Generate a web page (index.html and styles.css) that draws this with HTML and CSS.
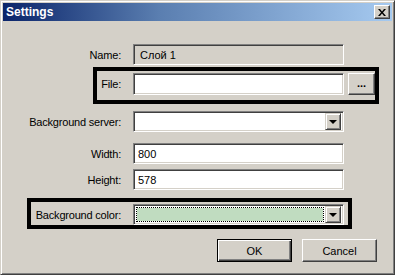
FILE: index.html
```html
<!DOCTYPE html>
<html lang="en">
  <head>
    <meta charset="UTF-8" />
    <title>Settings</title>
    <link rel="stylesheet" href="styles.css">
  </head>
  <body>
    <div class="window">
      <div class="titlebar">
        <span class="title">Settings</span>
        <button class="close" type="button">
          <svg width="8" height="7" viewBox="0 0 8 7">
            <path d="M0 0h2l2 2.5L6 0h2L5 3.5 8 7H6L4 4.5 2 7H0l3-3.5z" fill="#000"/>
          </svg>
        </button>
      </div>

      <div class="content">
        <div class="row row-name">
          <label class="label">Name:</label>
          <div class="field readonly">Слой 1</div>
        </div>

        <div class="row row-file">
          <label class="label">File:</label>
          <div class="field"></div>
          <button class="btn browse" type="button">...</button>
          <span class="mark mark-file"></span>
        </div>

        <div class="row row-server">
          <label class="label">Background server:</label>
          <div class="field combo">
            <span class="combo-value"></span>
            <span class="drop"><i class="arrow"></i></span>
          </div>
        </div>

        <div class="row row-width">
          <label class="label">Width:</label>
          <div class="field">800</div>
        </div>

        <div class="row row-height">
          <label class="label">Height:</label>
          <div class="field">578</div>
        </div>

        <div class="row row-color">
          <label class="label">Background color:</label>
          <div class="field combo color-combo">
            <span class="combo-value"><span class="swatch"></span></span>
            <span class="drop"><i class="arrow"></i></span>
          </div>
          <span class="mark mark-color"></span>
        </div>

        <div class="buttons">
          <button class="btn btn-default" type="button">OK</button>
          <button class="btn" type="button">Cancel</button>
        </div>
      </div>
    </div>
  </body>
</html>
```

FILE: styles.css
```css
* {
  margin: 0;
  padding: 0;
  box-sizing: border-box;
}

body {
  font-family: 'Liberation Sans', Arial, sans-serif;
  font-size: 11px;
  color: #000;
  background: #d4d0c8;
}

.window {
  width: 395px;
  height: 275px;
  background: #d4d0c8;
  border: 1px solid;
  border-color: #d4d0c8 #404040 #404040 #d4d0c8;
  box-shadow: inset 1px 1px #fff, inset -1px -1px #808080;
  padding: 2px;
  display: flex;
  flex-direction: column;
}

.titlebar {
  height: 18px;
  display: flex;
  align-items: center;
  justify-content: space-between;
  padding: 0 2px 0 3px;
  background: linear-gradient(90deg, #0a246a 0%, #5a7eb0 40%, #a6caf0 100%);
}

.title {
  color: #fff;
  font-weight: bold;
  font-size: 12px;
  font-family: 'Liberation Sans', Arial, sans-serif;
}

.close {
  width: 16px;
  height: 14px;
  display: flex;
  align-items: center;
  justify-content: center;
  background: #d4d0c8;
  border: 1px solid;
  border-color: #fff #404040 #404040 #fff;
  box-shadow: inset -1px -1px #808080;
}

.content {
  display: flex;
  flex-direction: column;
}

.row {
  position: relative;
  display: flex;
  align-items: center;
  height: 21px;
}

.row-name { margin-top: 23px; }
.row-file { margin-top: 8px; height: 22px; }
.row-server { margin-top: 16px; }
.row-width { margin-top: 11px; }
.row-height { margin-top: 5px; }
.row-color { margin-top: 14px; }

.label {
  width: 118px;
  text-align: right;
  margin-right: 12px;
  letter-spacing: -0.2px;
}

.field {
  width: 211px;
  height: 100%;
  display: flex;
  align-items: center;
  padding-left: 4px;
  background: #fff;
  border: 1px solid;
  border-color: #808080 #fff #fff #808080;
  box-shadow: inset 1px 1px #404040, inset -1px -1px #d4d0c8;
}

.field.readonly {
  background: #d4d0c8;
  padding-left: 6px;
}

.combo {
  padding: 2px;
  justify-content: space-between;
}

.combo-value {
  flex: 1;
  height: 100%;
}

.drop {
  width: 16px;
  height: 17px;
  display: flex;
  align-items: center;
  justify-content: center;
  background: #d4d0c8;
  border: 1px solid;
  border-color: #d4d0c8 #404040 #404040 #d4d0c8;
  box-shadow: inset 1px 1px #fff, inset -1px -1px #808080;
}

.arrow {
  width: 0;
  height: 0;
  border-left: 4px solid transparent;
  border-right: 4px solid transparent;
  border-top: 4px solid #000;
  margin-top: 1px;
}

.color-combo .combo-value {
  padding: 1px;
  margin-right: 1px;
  outline: 1px dotted #000;
  outline-offset: -1px;
}

.swatch {
  display: block;
  height: 100%;
  background: #c0dcc0;
}

.btn {
  font-family: 'Liberation Sans', Arial, sans-serif;
  font-size: 11px;
  color: #000;
  background: #d4d0c8;
  border: 1px solid;
  border-color: #fff #404040 #404040 #fff;
  box-shadow: inset -1px -1px #808080;
}

.browse {
  width: 27px;
  height: 22px;
  margin-left: 4px;
  padding-bottom: 3px;
  font-weight: bold;
}

.mark {
  position: absolute;
  border: 4px solid #000;
  pointer-events: none;
}

.mark-file {
  left: 90px;
  top: -6px;
  width: 286px;
  height: 37px;
}

.mark-color {
  left: 24px;
  top: -6px;
  width: 325px;
  height: 31px;
}

.buttons {
  display: flex;
  justify-content: flex-end;
  gap: 10px;
  margin-top: 14px;
  padding-right: 15px;
}

.buttons .btn {
  width: 75px;
  height: 23px;
}

.btn-default {
  border: 1px solid #000;
  box-shadow: inset 1px 1px #fff, inset -1px -1px #404040, inset -2px -2px #808080;
}
```
